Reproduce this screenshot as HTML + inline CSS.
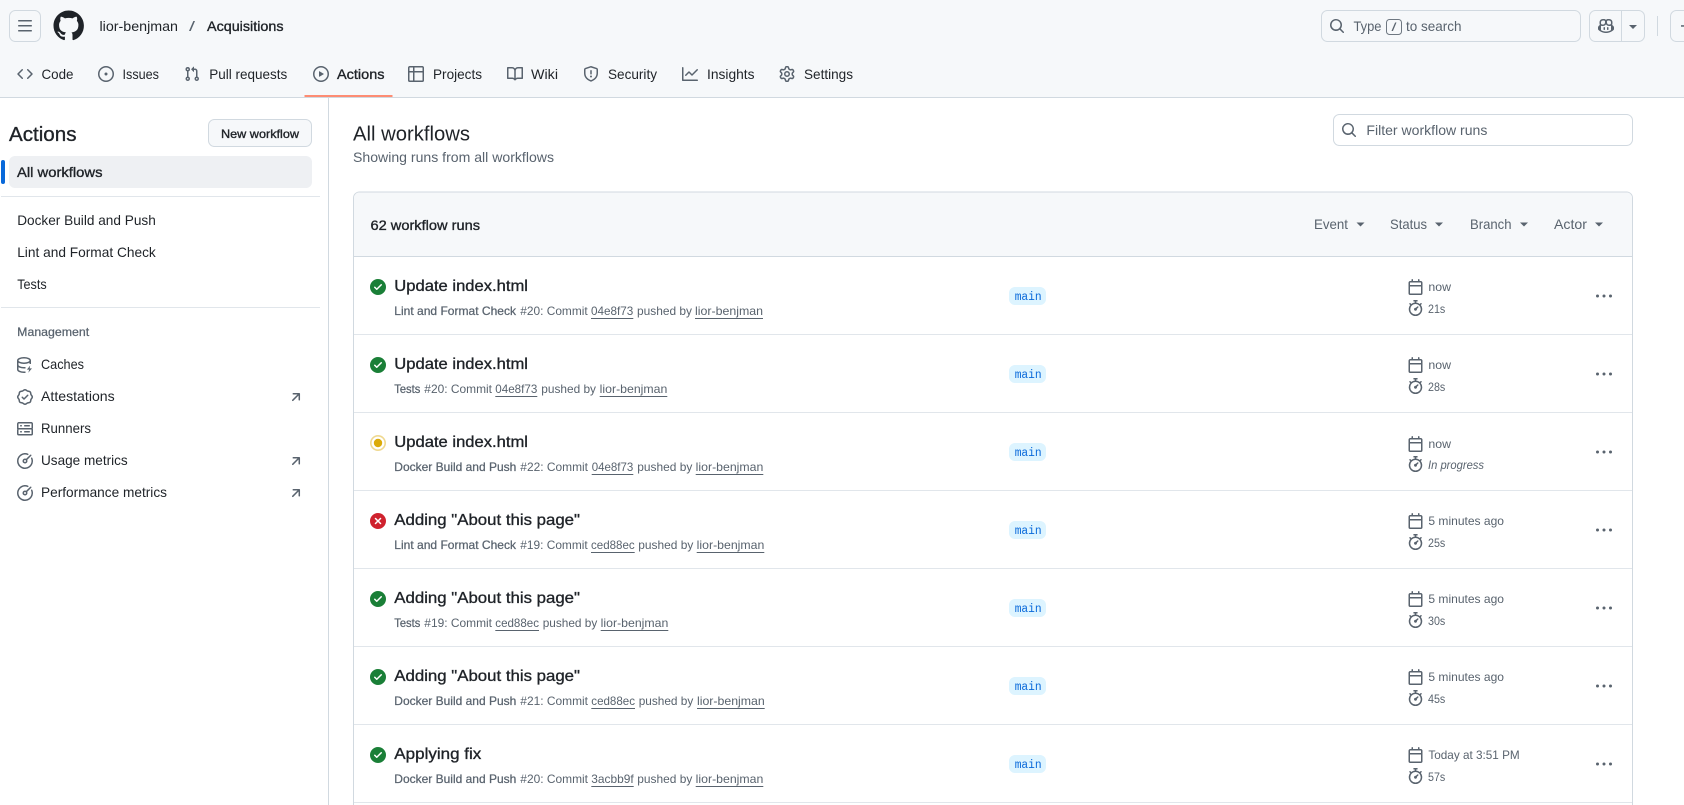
<!DOCTYPE html>
<html lang="en"><head><meta charset="utf-8"><title>Workflow runs · lior-benjman/Acquisitions</title>
<style>
html,body{margin:0;padding:0;width:1684px;height:805px;overflow:hidden;background:#fff}
svg{display:block}
text{font-family:"Liberation Sans",sans-serif;font-size:14px;fill:#1f2328;white-space:pre}
.m{fill:#59636e}
.s12{font-size:12px}
.sb{stroke:#1f2328;stroke-width:.35px}
.sbm{stroke:#59636e;stroke-width:.25px;fill:#59636e}
.t{font-size:16px}
.b{font-family:"Liberation Mono",monospace;font-size:11.5px;fill:#0969da}
.ic{fill:#59636e}
.hl{stroke:#e1e6eb;stroke-width:1}
.ln{stroke:#d1d9e0;stroke-width:1}
</style></head><body>
<svg xmlns="http://www.w3.org/2000/svg" width="1684" height="805" viewBox="0 0 1684 805">
<defs>
<path id="bars" d="M1 2.75A.75.75 0 0 1 1.75 2h12.5a.75.75 0 0 1 0 1.5H1.75A.75.75 0 0 1 1 2.75Zm0 5A.75.75 0 0 1 1.75 7h12.5a.75.75 0 0 1 0 1.5H1.75A.75.75 0 0 1 1 7.75ZM1.75 12h12.5a.75.75 0 0 1 0 1.5H1.75a.75.75 0 0 1 0-1.5Z"/>
<path id="mark" d="M8 0c4.42 0 8 3.58 8 8a8.013 8.013 0 0 1-5.45 7.59c-.4.08-.55-.17-.55-.38 0-.27.01-1.13.01-2.2 0-.75-.25-1.23-.54-1.48 1.78-.2 3.65-.88 3.65-3.95 0-.88-.31-1.59-.82-2.15.08-.2.36-1.02-.08-2.12 0 0-.67-.22-2.2.82-.64-.18-1.32-.27-2-.27-.68 0-1.36.09-2 .27-1.53-1.03-2.2-.82-2.2-.82-.44 1.1-.16 1.92-.08 2.12-.51.56-.82 1.28-.82 2.15 0 3.06 1.86 3.75 3.64 3.95-.23.2-.44.55-.51 1.07-.46.21-1.61.55-2.33-.66-.15-.24-.6-.83-1.23-.82-.67.01-.27.38.01.53.34.19.73.9.82 1.13.16.45.68 1.31 2.69.94 0 .67.01 1.3.01 1.49 0 .21-.15.45-.55.38A7.995 7.995 0 0 1 0 8c0-4.42 3.58-8 8-8Z"/>
<path id="search" d="M10.68 11.74a6 6 0 0 1-7.922-8.982 6 6 0 0 1 8.982 7.922l3.04 3.04a.749.749 0 0 1-.326 1.275.749.749 0 0 1-.734-.215ZM11.5 7a4.499 4.499 0 1 0-8.997 0A4.499 4.499 0 0 0 11.5 7Z"/>
<path id="code" d="m11.28 3.22 4.25 4.25a.75.75 0 0 1 0 1.06l-4.25 4.25a.749.749 0 0 1-1.275-.326.749.749 0 0 1 .215-.734L13.94 8l-3.72-3.72a.749.749 0 0 1 .326-1.275.749.749 0 0 1 .734.215Zm-6.56 0a.751.751 0 0 1 1.042.018.751.751 0 0 1 .018 1.042L2.06 8l3.72 3.72a.749.749 0 0 1-.326 1.275.749.749 0 0 1-.734-.215L.47 8.53a.75.75 0 0 1 0-1.06Z"/>
<path id="issue" d="M8 9.5a1.5 1.5 0 1 0 0-3 1.5 1.5 0 0 0 0 3ZM8 0a8 8 0 1 1 0 16A8 8 0 0 1 8 0ZM1.5 8a6.5 6.5 0 1 0 13 0 6.5 6.5 0 0 0-13 0Z"/>
<path id="pr" d="M1.5 3.25a2.25 2.25 0 1 1 3 2.122v5.256a2.251 2.251 0 1 1-1.5 0V5.372A2.25 2.25 0 0 1 1.5 3.25Zm5.677-.177L9.573.677A.25.25 0 0 1 10 .854V2.5h1A2.5 2.5 0 0 1 13.5 5v5.628a2.251 2.251 0 1 1-1.5 0V5a1 1 0 0 0-1-1h-1v1.646a.25.25 0 0 1-.427.177L7.177 3.427a.25.25 0 0 1 0-.354ZM3.75 2.5a.75.75 0 1 0 0 1.5.75.75 0 0 0 0-1.5Zm0 9.5a.75.75 0 1 0 0 1.5.75.75 0 0 0 0-1.5Zm8.25.75a.75.75 0 1 0 1.5 0 .75.75 0 0 0-1.5 0Z"/>
<path id="play" d="M8 0a8 8 0 1 1 0 16A8 8 0 0 1 8 0ZM1.5 8a6.5 6.5 0 1 0 13 0 6.5 6.5 0 0 0-13 0Zm4.879-2.773 4.264 2.559a.25.25 0 0 1 0 .428l-4.264 2.559A.25.25 0 0 1 6 10.559V5.442a.25.25 0 0 1 .379-.215Z"/>
<path id="table" d="M0 1.75C0 .784.784 0 1.75 0h12.5C15.216 0 16 .784 16 1.75v12.5A1.75 1.75 0 0 1 14.25 16H1.75A1.75 1.75 0 0 1 0 14.25ZM6.5 6.5v8h7.75a.25.25 0 0 0 .25-.25V6.5Zm8-1.5V1.75a.25.25 0 0 0-.25-.25H6.5V5Zm-13 1.5v7.75c0 .138.112.25.25.25H5v-8ZM5 5V1.5H1.75a.25.25 0 0 0-.25.25V5Z"/>
<path id="book" d="M0 1.75A.75.75 0 0 1 .75 1h4.253c1.227 0 2.317.59 3 1.501A3.743 3.743 0 0 1 11.006 1h4.245a.75.75 0 0 1 .75.75v10.5a.75.75 0 0 1-.75.75h-4.507a2.25 2.25 0 0 0-1.591.659l-.622.621a.75.75 0 0 1-1.06 0l-.622-.621A2.25 2.25 0 0 0 5.258 13H.75a.75.75 0 0 1-.75-.75Zm7.251 10.324.004-5.073-.002-2.253A2.25 2.25 0 0 0 5.003 2.5H1.5v9h3.757a3.75 3.75 0 0 1 1.994.574ZM8.755 4.75l-.004 7.322a3.752 3.752 0 0 1 1.992-.572H14.5v-9h-3.495a2.25 2.25 0 0 0-2.25 2.25Z"/>
<path id="shield" d="M7.467.133a1.748 1.748 0 0 1 1.066 0l5.25 1.68A1.75 1.75 0 0 1 15 3.48V7c0 1.566-.32 3.182-1.303 4.682-.983 1.498-2.585 2.813-5.032 3.855a1.697 1.697 0 0 1-1.33 0c-2.447-1.042-4.049-2.357-5.032-3.855C1.32 10.182 1 8.566 1 7V3.48a1.75 1.75 0 0 1 1.217-1.667Zm.61 1.429a.25.25 0 0 0-.153 0l-5.25 1.68a.25.25 0 0 0-.174.238V7c0 1.358.275 2.666 1.057 3.86.784 1.194 2.121 2.34 4.366 3.297a.196.196 0 0 0 .154 0c2.245-.956 3.582-2.104 4.366-3.298C13.225 9.666 13.5 8.36 13.5 7V3.48a.251.251 0 0 0-.174-.237l-5.25-1.68ZM8.75 4.75v3a.75.75 0 0 1-1.5 0v-3a.75.75 0 0 1 1.5 0ZM9 10.5a1 1 0 1 1-2 0 1 1 0 0 1 2 0Z"/>
<path id="graph" d="M1.5 1.75V13.5h13.75a.75.75 0 0 1 0 1.5H.75a.75.75 0 0 1-.75-.75V1.75a.75.75 0 0 1 1.5 0Zm14.28 2.53-5.25 5.25a.75.75 0 0 1-1.06 0L7 7.06 4.28 9.78a.751.751 0 0 1-1.042-.018.751.751 0 0 1-.018-1.042l3.25-3.25a.75.75 0 0 1 1.06 0L10 7.94l4.72-4.72a.751.751 0 0 1 1.042.018.751.751 0 0 1 .018 1.042Z"/>
<path id="gear" d="M8 0a8.2 8.2 0 0 1 .701.031C9.444.095 9.99.645 10.16 1.29l.288 1.107c.018.066.079.158.212.224.231.114.454.243.668.386.123.082.233.09.299.071l1.103-.303c.644-.176 1.392.021 1.82.63.27.385.506.792.704 1.218.315.675.111 1.422-.364 1.891l-.814.806c-.049.048-.098.147-.088.294.016.257.016.515 0 .772-.01.147.038.246.088.294l.814.806c.475.469.679 1.216.364 1.891a7.977 7.977 0 0 1-.704 1.217c-.428.61-1.176.807-1.82.63l-1.102-.302c-.067-.019-.177-.011-.3.071a5.909 5.909 0 0 1-.668.386c-.133.066-.194.158-.211.224l-.29 1.106c-.168.646-.715 1.196-1.458 1.26a8.006 8.006 0 0 1-1.402 0c-.743-.064-1.289-.614-1.458-1.26l-.289-1.106c-.018-.066-.079-.158-.212-.224a5.738 5.738 0 0 1-.668-.386c-.123-.082-.233-.09-.299-.071l-1.103.303c-.644.176-1.392-.021-1.82-.63a8.12 8.12 0 0 1-.704-1.218c-.315-.675-.111-1.422.363-1.891l.815-.806c.05-.048.098-.147.088-.294a6.214 6.214 0 0 1 0-.772c.01-.147-.038-.246-.088-.294l-.815-.806C.635 6.045.431 5.298.746 4.623a7.92 7.92 0 0 1 .704-1.217c.428-.61 1.176-.807 1.82-.63l1.102.302c.067.019.177.011.3-.071.214-.143.437-.272.668-.386.133-.066.194-.158.211-.224l.29-1.106C6.009.645 6.556.095 7.299.03 7.53.01 7.764 0 8 0Zm-.571 1.525c-.036.003-.108.036-.137.146l-.289 1.105c-.147.561-.549.967-.998 1.189-.173.086-.34.183-.5.29-.417.278-.97.423-1.529.27l-1.103-.303c-.109-.03-.175.016-.195.045-.22.312-.412.644-.573.99-.014.031-.021.11.059.19l.815.806c.411.406.562.957.53 1.456a4.709 4.709 0 0 0 0 .582c.032.499-.119 1.05-.53 1.456l-.815.806c-.081.08-.073.159-.059.19.162.346.353.677.573.989.02.03.085.076.195.046l1.102-.303c.56-.153 1.113-.008 1.53.27.161.107.328.204.501.29.447.222.85.629.997 1.189l.289 1.105c.029.109.101.143.137.146a6.6 6.6 0 0 0 1.142 0c.036-.003.108-.036.137-.146l.289-1.105c.147-.561.549-.967.998-1.189.173-.086.34-.183.5-.29.417-.278.97-.423 1.529-.27l1.103.303c.109.029.175-.016.195-.045.22-.313.411-.644.573-.99.014-.031.021-.11-.059-.19l-.815-.806c-.411-.406-.562-.957-.53-1.456a4.709 4.709 0 0 0 0-.582c-.032-.499.119-1.05.53-1.456l.815-.806c.081-.08.073-.159.059-.19a6.464 6.464 0 0 0-.573-.989c-.02-.03-.085-.076-.195-.046l-1.102.303c-.56.153-1.113.008-1.53-.27a4.44 4.44 0 0 0-.501-.29c-.447-.222-.85-.629-.997-1.189l-.289-1.105c-.029-.11-.101-.143-.137-.146a6.6 6.6 0 0 0-1.142 0ZM11 8a3 3 0 1 1-6 0 3 3 0 0 1 6 0ZM9.5 8a1.5 1.5 0 1 0-3.001.001A1.5 1.5 0 0 0 9.5 8Z"/>
<path id="copilot" d="M7.998 15.035c-4.562 0-7.873-2.914-7.998-3.749V9.338c.085-.628.677-1.686 1.588-2.065.013-.07.024-.143.036-.218.029-.183.06-.384.126-.612-.201-.508-.254-1.084-.254-1.656 0-.87.128-1.769.693-2.484.579-.733 1.494-1.124 2.724-1.261 1.206-.134 2.262.034 2.944.765.05.053.096.108.139.165.044-.057.094-.112.143-.165.682-.731 1.738-.899 2.944-.765 1.23.137 2.145.528 2.724 1.261.566.715.693 1.614.693 2.484 0 .572-.053 1.148-.254 1.656.066.228.098.429.126.612.012.076.024.148.037.218.924.385 1.522 1.471 1.591 2.095v1.872c0 .766-3.351 3.795-8.002 3.795Zm0-1.485c2.28 0 4.584-1.11 5.002-1.433V7.862l-.023-.116c-.49.21-1.075.291-1.727.291-1.146 0-2.059-.327-2.71-.991A3.222 3.222 0 0 1 8 6.303a3.24 3.24 0 0 1-.544.743c-.65.664-1.563.991-2.71.991-.652 0-1.236-.081-1.727-.291l-.023.116v4.255c.419.323 2.722 1.433 5.002 1.433ZM6.762 2.83c-.193-.206-.637-.413-1.682-.297-1.019.113-1.479.404-1.713.7-.247.312-.369.789-.369 1.554 0 .793.129 1.171.308 1.371.162.181.519.379 1.442.379.853 0 1.339-.235 1.638-.54.315-.322.527-.827.617-1.553.117-.935-.037-1.395-.241-1.614Zm4.155-.297c-1.044-.116-1.488.091-1.681.297-.204.219-.359.679-.242 1.614.091.726.303 1.231.618 1.553.299.305.784.54 1.638.54.922 0 1.28-.198 1.442-.379.179-.2.308-.578.308-1.371 0-.765-.123-1.242-.37-1.554-.233-.296-.693-.587-1.713-.7ZM6.25 9.037a.75.75 0 0 1 .75.75v1.501a.75.75 0 0 1-1.5 0V9.787a.75.75 0 0 1 .75-.75Zm4.25.75v1.501a.75.75 0 0 1-1.5 0V9.787a.75.75 0 0 1 1.5 0Z"/>
<path id="ok" d="M8 16A8 8 0 1 1 8 0a8 8 0 0 1 0 16Zm3.78-9.72a.751.751 0 0 0-.018-1.042.751.751 0 0 0-1.042-.018L6.75 9.19 5.28 7.72a.751.751 0 0 0-1.042.018.751.751 0 0 0-.018 1.042l2 2a.75.75 0 0 0 1.06 0Z"/>
<path id="fail" d="M2.343 13.657A8 8 0 1 1 13.658 2.343 8 8 0 0 1 2.343 13.657ZM6.03 4.97a.751.751 0 0 0-1.042.018.751.751 0 0 0-.018 1.042L6.94 8 4.97 9.97a.749.749 0 0 0 .326 1.275.749.749 0 0 0 .734-.215L8 9.06l1.97 1.97a.749.749 0 0 0 1.275-.326.749.749 0 0 0-.215-.734L9.06 8l1.97-1.97a.749.749 0 0 0-.326-1.275.749.749 0 0 0-.734.215L8 6.94Z"/>
<path id="kebab" d="M8 9a1.5 1.5 0 1 0 0-3 1.5 1.5 0 0 0 0 3ZM1.5 9a1.5 1.5 0 1 0 0-3 1.5 1.5 0 0 0 0 3Zm13 0a1.5 1.5 0 1 0 0-3 1.5 1.5 0 0 0 0 3Z"/>
<path id="cal" d="M4.75 0a.75.75 0 0 1 .75.75V2h5V.75a.75.75 0 0 1 1.5 0V2h1.25c.966 0 1.75.784 1.75 1.75v10.5A1.75 1.75 0 0 1 13.25 16H2.75A1.75 1.75 0 0 1 1 14.25V3.75C1 2.784 1.784 2 2.75 2H4V.75A.75.75 0 0 1 4.75 0ZM2.5 7.5v6.75c0 .138.112.25.25.25h10.5a.25.25 0 0 0 .25-.25V7.5Zm10.75-4H2.75a.25.25 0 0 0-.25.25V6h11V3.75a.25.25 0 0 0-.25-.25Z"/>
<path id="watch" d="M5.75.75A.75.75 0 0 1 6.5 0h3a.75.75 0 0 1 0 1.5h-.75v1l-.001.041a6.724 6.724 0 0 1 3.464 1.435l.007-.006.75-.75a.749.749 0 0 1 1.275.326.749.749 0 0 1-.215.734l-.75.75-.006.007a6.75 6.75 0 1 1-10.548 0L2.72 5.03l-.75-.75a.751.751 0 0 1 .018-1.042.751.751 0 0 1 1.042-.018l.75.75.007.006A6.72 6.72 0 0 1 7.25 2.541V1.5H6.5a.75.75 0 0 1-.75-.75ZM8 14.5a5.25 5.25 0 1 0-.001-10.501A5.25 5.25 0 0 0 8 14.5Zm.389-6.7 1.33-1.33a.75.75 0 1 1 1.061 1.06L9.45 8.861A1.503 1.503 0 0 1 8 10.75a1.499 1.499 0 1 1 .389-2.95Z"/>
<path id="arrow" d="M4.53 4.75A.75.75 0 0 1 5.28 4h6.01a.75.75 0 0 1 .75.75v6.01a.75.75 0 0 1-1.5 0v-4.2l-5.26 5.261a.749.749 0 0 1-1.275-.326.749.749 0 0 1 .215-.734L9.48 5.5h-4.2a.75.75 0 0 1-.75-.75Z"/>
<path id="verified" d="m9.585.52.929.68c.153.112.331.186.518.215l1.138.175a2.678 2.678 0 0 1 2.24 2.24l.174 1.139c.029.187.103.365.215.518l.68.928a2.677 2.677 0 0 1 0 3.17l-.68.928a1.174 1.174 0 0 0-.215.518l-.175 1.138a2.678 2.678 0 0 1-2.241 2.241l-1.138.175a1.17 1.17 0 0 0-.518.215l-.928.68a2.677 2.677 0 0 1-3.17 0l-.928-.68a1.174 1.174 0 0 0-.518-.215L3.83 14.41a2.678 2.678 0 0 1-2.24-2.24l-.175-1.138a1.17 1.17 0 0 0-.215-.518l-.68-.928a2.677 2.677 0 0 1 0-3.17l.68-.928c.112-.153.186-.331.215-.518l.175-1.14a2.678 2.678 0 0 1 2.24-2.24l1.139-.175c.187-.029.365-.103.518-.215l.928-.68a2.677 2.677 0 0 1 3.17 0ZM7.303 1.728l-.927.68a2.67 2.67 0 0 1-1.18.489l-1.137.174a1.179 1.179 0 0 0-.987.987l-.174 1.136a2.677 2.677 0 0 1-.489 1.18l-.68.928a1.18 1.18 0 0 0 0 1.394l.68.927c.256.348.424.753.489 1.18l.174 1.137c.078.509.478.909.987.987l1.136.174a2.67 2.67 0 0 1 1.18.489l.928.68c.414.305.979.305 1.394 0l.927-.68a2.67 2.67 0 0 1 1.18-.489l1.137-.174a1.18 1.18 0 0 0 .987-.987l.174-1.136a2.67 2.67 0 0 1 .489-1.18l.68-.928a1.176 1.176 0 0 0 0-1.394l-.68-.927a2.686 2.686 0 0 1-.489-1.18l-.174-1.137a1.179 1.179 0 0 0-.987-.987l-1.136-.174a2.677 2.677 0 0 1-1.18-.489l-.928-.68a1.176 1.176 0 0 0-1.394 0ZM11.28 6.78l-3.75 3.75a.75.75 0 0 1-1.06 0L4.72 8.78a.751.751 0 0 1 .018-1.042.751.751 0 0 1 1.042-.018l1.22 1.22 3.22-3.22a.751.751 0 0 1 1.042.018.751.751 0 0 1 .018 1.042Z"/>
<path id="server" d="M1.75 1h12.5c.966 0 1.75.784 1.75 1.75v4c0 .372-.116.717-.314 1 .198.283.314.628.314 1v4a1.75 1.75 0 0 1-1.75 1.75H1.75A1.75 1.75 0 0 1 0 13.25v-4c0-.372.116-.717.314-1a1.739 1.739 0 0 1-.314-1v-4C0 1.784.784 1 1.75 1ZM1.5 2.75v4c0 .138.112.25.25.25h12.5a.25.25 0 0 0 .25-.25v-4a.25.25 0 0 0-.25-.25H1.75a.25.25 0 0 0-.25.25Zm.25 5.75a.25.25 0 0 0-.25.25v4c0 .138.112.25.25.25h12.5a.25.25 0 0 0 .25-.25v-4a.25.25 0 0 0-.25-.25ZM7 4.75A.75.75 0 0 1 7.75 4h4.5a.75.75 0 0 1 0 1.5h-4.5A.75.75 0 0 1 7 4.75ZM7.75 10h4.5a.75.75 0 0 1 0 1.5h-4.5a.75.75 0 0 1 0-1.5ZM3 4.75A.75.75 0 0 1 3.75 4h.5a.75.75 0 0 1 0 1.5h-.5A.75.75 0 0 1 3 4.75ZM3.75 10h.5a.75.75 0 0 1 0 1.5h-.5a.75.75 0 0 1 0-1.5Z"/>
<path id="meter" d="M8 1.5a6.5 6.5 0 1 0 6.016 4.035.75.75 0 0 1 1.388-.57 8 8 0 1 1-4.37-4.37.75.75 0 0 1-.569 1.389A6.473 6.473 0 0 0 8 1.5Zm6.28.22a.75.75 0 0 1 0 1.06l-4.063 4.064a2.5 2.5 0 1 1-1.06-1.06L13.22 1.72a.75.75 0 0 1 1.06 0ZM7 8a1 1 0 1 0 2 0 1 1 0 0 0-2 0Z"/>
<g id="db"><ellipse cx="7" cy="3.5" rx="6.25" ry="2.75" fill="none" stroke="#59636e" stroke-width="1.5"/><path d="M.75 3.5v9c0 1.5 2.8 2.75 6.25 2.75h1.5M.75 8c0 1.5 2.8 2.75 6.25 2.75h1.5M13.25 3.5v3.5" fill="none" stroke="#59636e" stroke-width="1.5"/><path d="M13.2 8.5 9.9 12.6h2.3l-.9 3.2 3.7-4.4h-2.4z" fill="#59636e"/></g>
<path id="caret" d="M0 0h8L4 4Z"/>
</defs>

<!-- page header -->
<rect width="1684" height="98" fill="#f6f8fa"/>
<line x1="0" y1="97.5" x2="1684" y2="97.5" class="ln"/>
<rect x="9.5" y="10.5" width="31" height="31" rx="6" fill="#f6f8fa" stroke="#d1d9e0"/>
<use href="#bars" x="17" y="18" class="ic"/>
<use href="#mark" transform="translate(53.5 10.5) scale(1.9)" fill="#1f2328"/>
<text x="99.5" y="31" textLength="78.5" lengthAdjust="spacingAndGlyphs">lior-benjman</text>
<text x="189" y="31" class="m" font-size="16" textLength="6" lengthAdjust="spacingAndGlyphs">/</text>
<text x="207" y="31" class="sb" textLength="76.5" lengthAdjust="spacingAndGlyphs">Acquisitions</text>

<rect x="1321.5" y="10.5" width="259" height="31" rx="6" fill="#f6f8fa" stroke="#d1d9e0"/>
<use href="#search" x="1329" y="18" class="ic"/>
<text x="1353.5" y="31" class="m" textLength="28" lengthAdjust="spacingAndGlyphs">Type</text>
<rect x="1386.5" y="19.5" width="15" height="15" rx="3" fill="none" stroke="#6e7781"/>
<text x="1391.5" y="31" class="m s12" textLength="5" lengthAdjust="spacingAndGlyphs">/</text>
<text x="1406" y="31" class="m" textLength="55.5" lengthAdjust="spacingAndGlyphs">to search</text>
<rect x="1589.5" y="10.5" width="55" height="31" rx="6" fill="#f6f8fa" stroke="#d1d9e0"/>
<line x1="1621.5" y1="11" x2="1621.5" y2="41" class="ln"/>
<use href="#copilot" x="1598" y="18" class="ic"/>
<use href="#caret" x="1629" y="25" class="ic"/>
<line x1="1657.5" y1="16" x2="1657.5" y2="36" class="ln"/>
<rect x="1670.5" y="10.5" width="30" height="31" rx="6" fill="#f6f8fa" stroke="#d1d9e0"/>
<rect x="1681" y="25.2" width="3" height="1.5" class="ic"/>

<!-- repo tabs -->
<use href="#code" x="17" y="66" class="ic"/>
<text x="41.5" y="79" textLength="32" lengthAdjust="spacingAndGlyphs">Code</text>
<use href="#issue" x="98" y="66" class="ic"/>
<text x="122.5" y="79" textLength="36.5" lengthAdjust="spacingAndGlyphs">Issues</text>
<use href="#pr" x="184" y="66" class="ic"/>
<text x="209.3" y="79" textLength="78" lengthAdjust="spacingAndGlyphs">Pull requests</text>
<use href="#play" x="313" y="66" class="ic"/>
<text x="337" y="79" class="sb" textLength="47.5" lengthAdjust="spacingAndGlyphs">Actions</text>
<rect x="304.5" y="95" width="88" height="2" fill="#fd8c73"/>
<use href="#table" x="408" y="66" class="ic"/>
<text x="433" y="79" textLength="49" lengthAdjust="spacingAndGlyphs">Projects</text>
<use href="#book" x="507" y="66" class="ic"/>
<text x="531" y="79" textLength="27" lengthAdjust="spacingAndGlyphs">Wiki</text>
<use href="#shield" x="583" y="66" class="ic"/>
<text x="608" y="79" textLength="49" lengthAdjust="spacingAndGlyphs">Security</text>
<use href="#graph" x="682" y="66" class="ic"/>
<text x="707" y="79" textLength="47.5" lengthAdjust="spacingAndGlyphs">Insights</text>
<use href="#gear" x="779" y="66" class="ic"/>
<text x="804" y="79" textLength="49" lengthAdjust="spacingAndGlyphs">Settings</text>

<!-- sidebar -->
<line x1="328.5" y1="98" x2="328.5" y2="805" class="ln"/>
<text x="9" y="141" style="font-size:20px" class="sb" textLength="67.5" lengthAdjust="spacingAndGlyphs">Actions</text>
<rect x="208.5" y="119.5" width="103" height="27" rx="6" fill="#f6f8fa" stroke="#d1d9e0"/>
<text x="221" y="138" class="s12 sb" textLength="78" lengthAdjust="spacingAndGlyphs">New workflow</text>
<rect x="9" y="156" width="303" height="32" rx="6" fill="#eef0f3"/>
<rect x="1" y="160" width="4" height="24" rx="2" fill="#0969da"/>
<text x="17" y="177" class="sb" textLength="85.5" lengthAdjust="spacingAndGlyphs">All workflows</text>
<line x1="1" y1="196.5" x2="320" y2="196.5" class="hl"/>
<text x="17.2" y="225" textLength="138.6" lengthAdjust="spacingAndGlyphs">Docker Build and Push</text>
<text x="17.2" y="257" textLength="138.6" lengthAdjust="spacingAndGlyphs">Lint and Format Check</text>
<text x="17.2" y="289" textLength="29.5" lengthAdjust="spacingAndGlyphs">Tests</text>
<line x1="1" y1="307.5" x2="320" y2="307.5" class="hl"/>
<text x="17.2" y="336" class="s12 sbm" textLength="72" lengthAdjust="spacingAndGlyphs">Management</text>
<use href="#db" x="17" y="357"/>
<text x="41" y="369" textLength="43" lengthAdjust="spacingAndGlyphs">Caches</text>
<use href="#verified" x="17" y="389" class="ic"/>
<text x="41" y="401" textLength="73.7" lengthAdjust="spacingAndGlyphs">Attestations</text>
<use href="#arrow" x="288" y="389" class="ic"/>
<use href="#server" x="17" y="421" class="ic"/>
<text x="41" y="433" textLength="50" lengthAdjust="spacingAndGlyphs">Runners</text>
<use href="#meter" x="17" y="453" class="ic"/>
<text x="41" y="465" textLength="86.7" lengthAdjust="spacingAndGlyphs">Usage metrics</text>
<use href="#arrow" x="288" y="453" class="ic"/>
<use href="#meter" x="17" y="485" class="ic"/>
<text x="41" y="497" textLength="126" lengthAdjust="spacingAndGlyphs">Performance metrics</text>
<use href="#arrow" x="288" y="485" class="ic"/>

<!-- main heading -->
<text x="353" y="140.5" style="font-size:20px" textLength="117" lengthAdjust="spacingAndGlyphs">All workflows</text>
<text x="353" y="162" class="m" textLength="201" lengthAdjust="spacingAndGlyphs">Showing runs from all workflows</text>
<rect x="1333.5" y="114.5" width="299" height="31" rx="6" fill="#fff" stroke="#d1d9e0"/>
<use href="#search" x="1341" y="122" class="ic"/>
<text x="1366.4" y="135" class="m" textLength="121" lengthAdjust="spacingAndGlyphs">Filter workflow runs</text>

<!-- runs box -->
<path d="M353.5 805V198a6 6 0 0 1 6-6H1626.5a6 6 0 0 1 6 6V805" fill="#fff" stroke="#d1d9e0"/>
<path d="M354 256.5V198a5.5 5.5 0 0 1 5.5-5.5H1626.5a5.5 5.5 0 0 1 5.5 5.5V256.5Z" fill="#f6f8fa"/>
<line x1="354" y1="256.5" x2="1632" y2="256.5" class="ln"/>
<text x="370.5" y="230" class="sb" textLength="109.5" lengthAdjust="spacingAndGlyphs">62 workflow runs</text>
<text x="1314" y="229" class="m" textLength="34" lengthAdjust="spacingAndGlyphs">Event</text>
<use href="#caret" x="1356.5" y="222.5" class="ic"/>
<text x="1390" y="229" class="m" textLength="37" lengthAdjust="spacingAndGlyphs">Status</text>
<use href="#caret" x="1435" y="222.5" class="ic"/>
<text x="1470" y="229" class="m" textLength="41.5" lengthAdjust="spacingAndGlyphs">Branch</text>
<use href="#caret" x="1520" y="222.5" class="ic"/>
<text x="1554" y="229" class="m" textLength="33" lengthAdjust="spacingAndGlyphs">Actor</text>
<use href="#caret" x="1595" y="222.5" class="ic"/>

<!-- row 1 -->
<g transform="translate(0 257)">
<use href="#ok" x="370" y="22" fill="#1a7f37"/>
<text x="394.3" y="34" class="t sb" textLength="133.7" lengthAdjust="spacingAndGlyphs">Update index.html</text>
<text x="394.3" y="58" class="s12 sbm" textLength="121.7" lengthAdjust="spacingAndGlyphs">Lint and Format Check</text>
<text x="520.3" y="58" class="s12 m" textLength="67.4" lengthAdjust="spacingAndGlyphs">#20: Commit</text>
<text x="591" y="58" class="s12 m" textLength="42.3" lengthAdjust="spacingAndGlyphs">04e8f73</text><rect x="591" y="61" width="42.3" height="1" class="ic"/>
<text x="637" y="58" class="s12 m" textLength="55" lengthAdjust="spacingAndGlyphs">pushed by</text>
<text x="695" y="58" class="s12 m" textLength="68" lengthAdjust="spacingAndGlyphs">lior-benjman</text><rect x="695" y="61" width="68" height="1" class="ic"/>
<rect x="1009" y="30" width="37" height="18" rx="6" fill="#ddf4ff"/><text x="1014.7" y="43" class="b" textLength="27" lengthAdjust="spacingAndGlyphs">main</text>
<use href="#cal" x="1407.5" y="22" class="ic"/><text x="1428.4" y="34" class="s12 m" textLength="22.6" lengthAdjust="spacingAndGlyphs">now</text>
<use href="#watch" x="1407.5" y="43" class="ic"/><text x="1428" y="56" class="s12 m" textLength="17.3" lengthAdjust="spacingAndGlyphs">21s</text>
<use href="#kebab" x="1596" y="31.5" class="ic"/>
</g>
<line x1="354" y1="334.5" x2="1632" y2="334.5" class="hl"/>

<!-- row 2 -->
<g transform="translate(0 335)">
<use href="#ok" x="370" y="22" fill="#1a7f37"/>
<text x="394.3" y="34" class="t sb" textLength="133.7" lengthAdjust="spacingAndGlyphs">Update index.html</text>
<text x="394.3" y="58" class="s12 sbm" textLength="26" lengthAdjust="spacingAndGlyphs">Tests</text>
<text x="424.3" y="58" class="s12 m" textLength="67.7" lengthAdjust="spacingAndGlyphs">#20: Commit</text>
<text x="495.3" y="58" class="s12 m" textLength="42" lengthAdjust="spacingAndGlyphs">04e8f73</text><rect x="495.3" y="61" width="42" height="1" class="ic"/>
<text x="541.3" y="58" class="s12 m" textLength="54.7" lengthAdjust="spacingAndGlyphs">pushed by</text>
<text x="599.7" y="58" class="s12 m" textLength="67.6" lengthAdjust="spacingAndGlyphs">lior-benjman</text><rect x="599.7" y="61" width="67.6" height="1" class="ic"/>
<rect x="1009" y="30" width="37" height="18" rx="6" fill="#ddf4ff"/><text x="1014.7" y="43" class="b" textLength="27" lengthAdjust="spacingAndGlyphs">main</text>
<use href="#cal" x="1407.5" y="22" class="ic"/><text x="1428.4" y="34" class="s12 m" textLength="22.6" lengthAdjust="spacingAndGlyphs">now</text>
<use href="#watch" x="1407.5" y="43" class="ic"/><text x="1428" y="56" class="s12 m" textLength="17.3" lengthAdjust="spacingAndGlyphs">28s</text>
<use href="#kebab" x="1596" y="31.5" class="ic"/>
</g>
<line x1="354" y1="412.5" x2="1632" y2="412.5" class="hl"/>

<!-- row 3 -->
<g transform="translate(0 413)">
<circle cx="378" cy="30" r="7.2" fill="none" stroke="#dbab0a" stroke-opacity=".45" stroke-width="1.6"/>
<circle cx="378" cy="30" r="4.2" fill="#dbab0a"/>
<text x="394.3" y="34" class="t sb" textLength="133.7" lengthAdjust="spacingAndGlyphs">Update index.html</text>
<text x="394.3" y="58" class="s12 sbm" textLength="122" lengthAdjust="spacingAndGlyphs">Docker Build and Push</text>
<text x="520.3" y="58" class="s12 m" textLength="67.7" lengthAdjust="spacingAndGlyphs">#22: Commit</text>
<text x="591.7" y="58" class="s12 m" textLength="41.6" lengthAdjust="spacingAndGlyphs">04e8f73</text><rect x="591.7" y="61" width="41.6" height="1" class="ic"/>
<text x="637.3" y="58" class="s12 m" textLength="55" lengthAdjust="spacingAndGlyphs">pushed by</text>
<text x="695.7" y="58" class="s12 m" textLength="67.6" lengthAdjust="spacingAndGlyphs">lior-benjman</text><rect x="695.7" y="61" width="67.6" height="1" class="ic"/>
<rect x="1009" y="30" width="37" height="18" rx="6" fill="#ddf4ff"/><text x="1014.7" y="43" class="b" textLength="27" lengthAdjust="spacingAndGlyphs">main</text>
<use href="#cal" x="1407.5" y="23" class="ic"/><text x="1428.4" y="35" class="s12 m" textLength="22.6" lengthAdjust="spacingAndGlyphs">now</text>
<use href="#watch" x="1407.5" y="43" class="ic"/><text x="1428" y="56" class="s12 m" font-style="italic" textLength="56" lengthAdjust="spacingAndGlyphs">In progress</text>
<use href="#kebab" x="1596" y="31.5" class="ic"/>
</g>
<line x1="354" y1="490.5" x2="1632" y2="490.5" class="hl"/>

<!-- row 4 -->
<g transform="translate(0 491)">
<use href="#fail" x="370" y="22" fill="#cf222e"/>
<text x="394.3" y="34" class="t sb" textLength="185.7" lengthAdjust="spacingAndGlyphs">Adding "About this page"</text>
<text x="394.3" y="58" class="s12 sbm" textLength="121.7" lengthAdjust="spacingAndGlyphs">Lint and Format Check</text>
<text x="520.3" y="58" class="s12 m" textLength="67.4" lengthAdjust="spacingAndGlyphs">#19: Commit</text>
<text x="591" y="58" class="s12 m" textLength="43.7" lengthAdjust="spacingAndGlyphs">ced88ec</text><rect x="591" y="61" width="43.7" height="1" class="ic"/>
<text x="638.3" y="58" class="s12 m" textLength="55" lengthAdjust="spacingAndGlyphs">pushed by</text>
<text x="696.7" y="58" class="s12 m" textLength="67.6" lengthAdjust="spacingAndGlyphs">lior-benjman</text><rect x="696.7" y="61" width="67.6" height="1" class="ic"/>
<rect x="1009" y="30" width="37" height="18" rx="6" fill="#ddf4ff"/><text x="1014.7" y="43" class="b" textLength="27" lengthAdjust="spacingAndGlyphs">main</text>
<use href="#cal" x="1407.5" y="22" class="ic"/><text x="1428.4" y="34" class="s12 m" textLength="75.6" lengthAdjust="spacingAndGlyphs">5 minutes ago</text>
<use href="#watch" x="1407.5" y="43" class="ic"/><text x="1428" y="56" class="s12 m" textLength="17.3" lengthAdjust="spacingAndGlyphs">25s</text>
<use href="#kebab" x="1596" y="31.5" class="ic"/>
</g>
<line x1="354" y1="568.5" x2="1632" y2="568.5" class="hl"/>

<!-- row 5 -->
<g transform="translate(0 569)">
<use href="#ok" x="370" y="22" fill="#1a7f37"/>
<text x="394.3" y="34" class="t sb" textLength="185.7" lengthAdjust="spacingAndGlyphs">Adding "About this page"</text>
<text x="394.3" y="58" class="s12 sbm" textLength="26" lengthAdjust="spacingAndGlyphs">Tests</text>
<text x="424.3" y="58" class="s12 m" textLength="67.7" lengthAdjust="spacingAndGlyphs">#19: Commit</text>
<text x="495.3" y="58" class="s12 m" textLength="43.7" lengthAdjust="spacingAndGlyphs">ced88ec</text><rect x="495.3" y="61" width="43.7" height="1" class="ic"/>
<text x="542.7" y="58" class="s12 m" textLength="54.6" lengthAdjust="spacingAndGlyphs">pushed by</text>
<text x="600.7" y="58" class="s12 m" textLength="67.6" lengthAdjust="spacingAndGlyphs">lior-benjman</text><rect x="600.7" y="61" width="67.6" height="1" class="ic"/>
<rect x="1009" y="30" width="37" height="18" rx="6" fill="#ddf4ff"/><text x="1014.7" y="43" class="b" textLength="27" lengthAdjust="spacingAndGlyphs">main</text>
<use href="#cal" x="1407.5" y="22" class="ic"/><text x="1428.4" y="34" class="s12 m" textLength="75.6" lengthAdjust="spacingAndGlyphs">5 minutes ago</text>
<use href="#watch" x="1407.5" y="43" class="ic"/><text x="1428" y="56" class="s12 m" textLength="17.3" lengthAdjust="spacingAndGlyphs">30s</text>
<use href="#kebab" x="1596" y="31.5" class="ic"/>
</g>
<line x1="354" y1="646.5" x2="1632" y2="646.5" class="hl"/>

<!-- row 6 -->
<g transform="translate(0 647)">
<use href="#ok" x="370" y="22" fill="#1a7f37"/>
<text x="394.3" y="34" class="t sb" textLength="185.7" lengthAdjust="spacingAndGlyphs">Adding "About this page"</text>
<text x="394.3" y="58" class="s12 sbm" textLength="122" lengthAdjust="spacingAndGlyphs">Docker Build and Push</text>
<text x="520.3" y="58" class="s12 m" textLength="67.7" lengthAdjust="spacingAndGlyphs">#21: Commit</text>
<text x="591.3" y="58" class="s12 m" textLength="43.7" lengthAdjust="spacingAndGlyphs">ced88ec</text><rect x="591.3" y="61" width="43.7" height="1" class="ic"/>
<text x="638.7" y="58" class="s12 m" textLength="54.6" lengthAdjust="spacingAndGlyphs">pushed by</text>
<text x="697" y="58" class="s12 m" textLength="67.7" lengthAdjust="spacingAndGlyphs">lior-benjman</text><rect x="697" y="61" width="67.7" height="1" class="ic"/>
<rect x="1009" y="30" width="37" height="18" rx="6" fill="#ddf4ff"/><text x="1014.7" y="43" class="b" textLength="27" lengthAdjust="spacingAndGlyphs">main</text>
<use href="#cal" x="1407.5" y="22" class="ic"/><text x="1428.4" y="34" class="s12 m" textLength="75.6" lengthAdjust="spacingAndGlyphs">5 minutes ago</text>
<use href="#watch" x="1407.5" y="43" class="ic"/><text x="1428" y="56" class="s12 m" textLength="17.3" lengthAdjust="spacingAndGlyphs">45s</text>
<use href="#kebab" x="1596" y="31.5" class="ic"/>
</g>
<line x1="354" y1="724.5" x2="1632" y2="724.5" class="hl"/>

<!-- row 7 -->
<g transform="translate(0 725)">
<use href="#ok" x="370" y="22" fill="#1a7f37"/>
<text x="394.3" y="34" class="t sb" textLength="87" lengthAdjust="spacingAndGlyphs">Applying fix</text>
<text x="394.3" y="58" class="s12 sbm" textLength="122" lengthAdjust="spacingAndGlyphs">Docker Build and Push</text>
<text x="520.3" y="58" class="s12 m" textLength="67.7" lengthAdjust="spacingAndGlyphs">#20: Commit</text>
<text x="591.3" y="58" class="s12 m" textLength="42.4" lengthAdjust="spacingAndGlyphs">3acbb9f</text><rect x="591.3" y="61" width="42.4" height="1" class="ic"/>
<text x="637.3" y="58" class="s12 m" textLength="55" lengthAdjust="spacingAndGlyphs">pushed by</text>
<text x="695.7" y="58" class="s12 m" textLength="67.6" lengthAdjust="spacingAndGlyphs">lior-benjman</text><rect x="695.7" y="61" width="67.6" height="1" class="ic"/>
<rect x="1009" y="30" width="37" height="18" rx="6" fill="#ddf4ff"/><text x="1014.7" y="43" class="b" textLength="27" lengthAdjust="spacingAndGlyphs">main</text>
<use href="#cal" x="1407.5" y="22" class="ic"/><text x="1428.4" y="34" class="s12 m" textLength="91.3" lengthAdjust="spacingAndGlyphs">Today at 3:51 PM</text>
<use href="#watch" x="1407.5" y="43" class="ic"/><text x="1428" y="56" class="s12 m" textLength="17.3" lengthAdjust="spacingAndGlyphs">57s</text>
<use href="#kebab" x="1596" y="31.5" class="ic"/>
</g>
<line x1="354" y1="802.5" x2="1632" y2="802.5" class="hl"/>
</svg>
</body></html>
